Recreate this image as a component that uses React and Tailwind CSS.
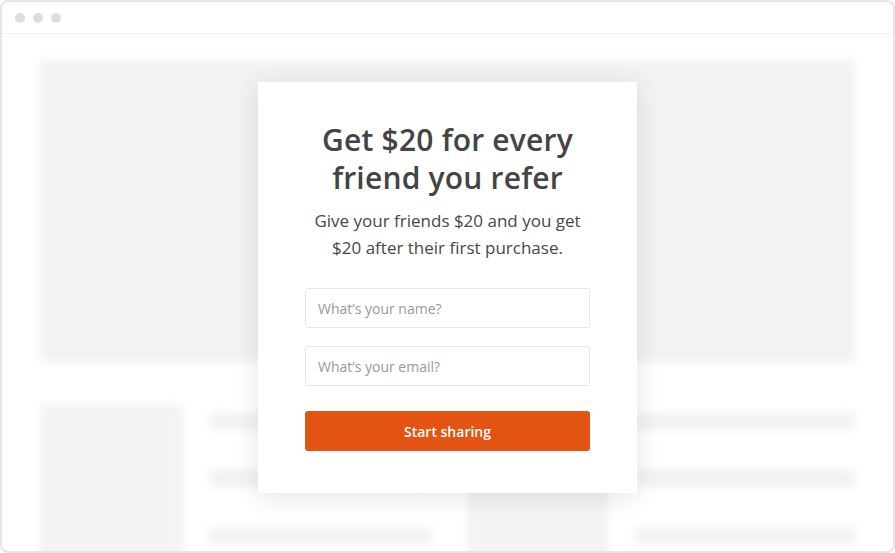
export default function App() {
  return (
    <div className="w-[895px] h-[553px] bg-white" style={{ fontFamily: '"Open Sans", "Liberation Sans", sans-serif' }}>
      <div className="relative w-full h-full border-2 border-[#e6e6e6] rounded-[8px] overflow-hidden bg-white flex flex-col">
        {/* top bar */}
        <div className="h-[32px] shrink-0 border-b border-[#f0f0f0] flex items-center gap-[8px] pl-[13px]">
          <div className="w-[10px] h-[10px] rounded-full bg-[#dddddd]" />
          <div className="w-[10px] h-[10px] rounded-full bg-[#dddddd]" />
          <div className="w-[10px] h-[10px] rounded-full bg-[#dddddd]" />
        </div>
        {/* blurred skeleton */}
        <div className="flex flex-col pt-[26px] pl-[38px] pr-[38px] gap-[43px] blur-[4px]">
          <div className="h-[302px] bg-[#f2f2f2]" />
          <div className="flex gap-[27px]">
            <div className="w-[143px] h-[160px] bg-[#f3f3f3]" />
            <div className="w-[220px] flex flex-col gap-[40px] pt-[8px]">
              <div className="h-[17px] bg-[#f2f2f2]" />
              <div className="h-[17px] bg-[#f2f2f2]" />
              <div className="h-[17px] bg-[#f2f2f2]" />
            </div>
            <div className="w-[141px] h-[160px] ml-[10px] bg-[#f3f3f3]" />
            <div className="flex-1 flex flex-col gap-[40px] pt-[8px]">
              <div className="h-[17px] bg-[#f2f2f2]" />
              <div className="h-[17px] bg-[#f2f2f2]" />
              <div className="h-[17px] bg-[#f2f2f2]" />
            </div>
          </div>
        </div>
        {/* modal */}
        <div className="absolute left-[256px] top-[80px] w-[379px] h-[411px] bg-white shadow-[0_4px_24px_rgba(0,0,0,0.10)] flex flex-col items-center pt-[39px] px-[47px]">
          <h1 className="text-[30px] leading-[38px] font-semibold text-[#444444] text-center tracking-[0.2px] whitespace-nowrap">
            Get $20 for every
            <br />
            friend you refer
          </h1>
          <p className="mt-[10px] text-[17px] leading-[27px] text-[#474747] text-center whitespace-nowrap">
            Give your friends $20 and you get
            <br />
            $20 after their first purchase.
          </p>
          <div className="mt-[27px] w-full flex flex-col gap-[18px]">
            <div className="h-[40px] border border-[#e6e6e6] rounded-[3px] flex items-center px-[12px] text-[14px] text-[#999999]">
              What’s your name?
            </div>
            <div className="h-[40px] border border-[#e6e6e6] rounded-[3px] flex items-center px-[12px] text-[14px] text-[#999999]">
              What’s your email?
            </div>
          </div>
          <button className="mt-[25px] w-full h-[40px] rounded-[3px] bg-[#e35413] text-white text-[14px] font-semibold">
            Start sharing
          </button>
        </div>
      </div>
    </div>
  );
}
